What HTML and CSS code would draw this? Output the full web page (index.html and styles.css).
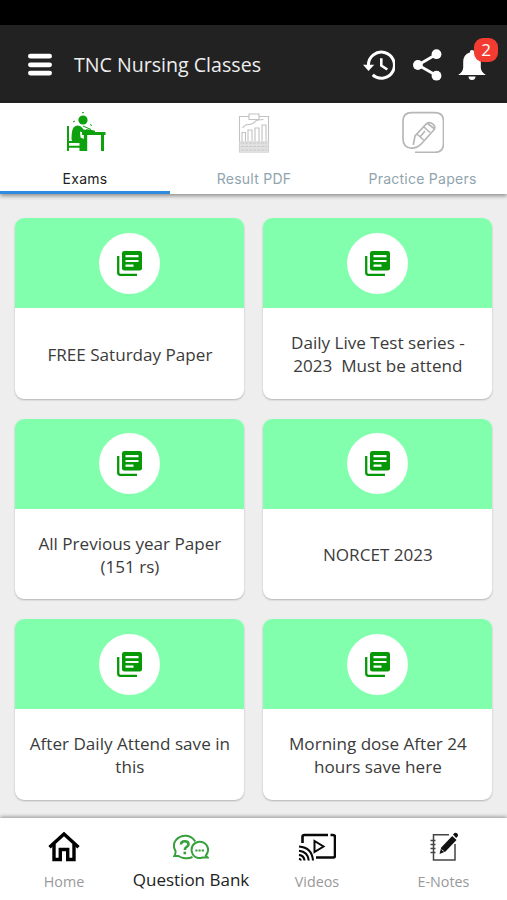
FILE: index.html
```html
<!DOCTYPE html>
<html lang="en">
<head>
<meta charset="utf-8">
<meta name="viewport" content="width=device-width">
<title>TNC Nursing Classes</title>
<link rel="stylesheet" href="styles.css">
</head>
<body>
<svg class="defs" width="0" height="0">
  <symbol id="library" viewBox="0 0 25 25">
    <path d="M1.2 5v16.600q0 2.200 2.200 2.200H20" fill="none" stroke="#079807" stroke-width="2.300"/>
    <rect x="5" y="0" width="20" height="19.500" rx="2.300" fill="#079807"/>
    <path d="M8.500 5.200h13M8.500 10h13M8.500 14.700h8" stroke="#fff" stroke-width="2.200"/>
  </symbol>
</svg>
<div class="status"></div>
<header class="bar">
  <svg class="menu" viewBox="0 0 24 24" width="24" height="24"><path d="M2.400 3.200h19.200M2.400 11.800h19.200M2.400 20.100h19.200" stroke="#fff" stroke-width="4.800" stroke-linecap="round"/></svg>
  <h1 class="title">TNC Nursing Classes</h1>
  <div class="actions">
    <svg width="32" height="30" viewBox="0 0 32 30" fill="none" stroke="#fff"><path d="M5.400 15.200A13 13 0 1 1 9.700 24.800" stroke-width="3"/><path d="M0 14.800h11.200L5.500 21z" fill="#fff" stroke="none"/><path d="M18.300 8.200v7.300l6 4" stroke-width="2.600"/></svg>
    <svg width="29" height="32" viewBox="0 0 29 32" fill="#fff"><path d="M23.500 5.300 5 16l18.500 10.500" fill="none" stroke="#fff" stroke-width="2.800"/><circle cx="23.500" cy="5.200" r="4.900"/><circle cx="4.900" cy="16" r="4.900"/><circle cx="23.500" cy="26.700" r="4.900"/></svg>
    <div class="bell"><svg width="28" height="32" viewBox="0 0 28 32" fill="#fff"><path d="M14 1q2.200 0 2.200 2.400Q22.800 5.400 22.800 13v5.500q0 4 5 7.500H.2q5-3.500 5-7.500V13q0-7.600 6.600-9.600Q11.800 1 14 1zM10.400 27.500h7.200q-.5 3.500-3.600 3.500t-3.600-3.500z"/></svg><span class="badge">2</span></div>
  </div>
</header>
<nav class="tabs">
  <div class="tab active">
    <svg width="42" height="42" viewBox="65 111 42 42" fill="#0da20d"><circle cx="84" cy="120" r="4.600"/><path d="M74.500 127.500q3-3 6.500-1.500 2 1 3.500 3.500l5 .8q2.500 1 1.500 2.500l-6 .2-4-1.500.5 6 4.500 2v11.500H82V143h-6q-3.500-.5-3.500-4.500 0-7.500 2-11z"/><path d="M87 129.200q4-.2 9 1.600v1.500h-9z"/><path d="M83 132h23.500v3H105v16h-3v-16H88.200v16h-3.400v-16H83z"/><path d="M69 126v25M69 142h14M69 146.800h13M81.500 142v9" fill="none" stroke="#0da20d" stroke-width="2"/><path d="M83 112.700h2M74 122l2-1M91 124.500l2 1M84 126l8 3.500" fill="none" stroke="#0da20d" stroke-width="1"/></svg>
    <span>Exams</span>
  </div>
  <div class="tab">
    <svg width="32" height="42" viewBox="238 111 32 42" fill="none" stroke="#c2c2c2" stroke-width="1.100"><path d="M249 116.500h-9.500V152h29v-35.500H259M249 114h10v5.500h-10z"/><path d="M242.500 128q3-4 6-3.500 4 .5 7-3.500 2-1 8-1.500M242 141v-8.500h3.500v8.500M248 141v-11h4v11M255 141v-13h4v13M262 141v-16h4v16"/><path d="M239.500 141h29v11h-29z" fill="#e0e0e0" stroke="none"/><path d="M241 143h26M241 146.500h26M241 150h26" stroke-dasharray="3 1" opacity=".7"/></svg>
    <span>Result PDF</span>
  </div>
  <div class="tab">
    <svg width="42" height="42" viewBox="401 111 42 42" fill="none" stroke="#b7b7b7" stroke-width="1.700"><path d="M414 152.300h20q8.500 0 8.500-8.500V121.200q0-8.500-8.500-8.500h-23.500q-8.500 0-8.500 8.500v17.500q0 9 8.500 9.500 5.500 0 9.500-4l13-14.500q2-3-1-5.500-3.500-3-6.500-.5L414 136l-1.700 9M416 134l6.500 6M422 126l7 6.500M426 123l7 5.500M419 137l5-6"/></svg>
    <span>Practice Papers</span>
  </div>
</nav>
<main class="grid">
  <article class="card"><div class="cover"><div class="disc"><svg width="25" height="25"><use href="#library"/></svg></div></div><p>FREE Saturday Paper</p></article>
  <article class="card"><div class="cover"><div class="disc"><svg width="25" height="25"><use href="#library"/></svg></div></div><p>Daily Live Test series -<br>2023&nbsp; Must be attend</p></article>
  <article class="card"><div class="cover"><div class="disc"><svg width="25" height="25"><use href="#library"/></svg></div></div><p>All Previous year Paper<br>(151 rs)</p></article>
  <article class="card"><div class="cover"><div class="disc"><svg width="25" height="25"><use href="#library"/></svg></div></div><p>NORCET 2023</p></article>
  <article class="card"><div class="cover"><div class="disc"><svg width="25" height="25"><use href="#library"/></svg></div></div><p>After Daily Attend save in<br>this</p></article>
  <article class="card"><div class="cover"><div class="disc"><svg width="25" height="25"><use href="#library"/></svg></div></div><p>Morning dose After 24<br>hours save here</p></article>
</main>
<nav class="bottom">
  <div class="item">
    <svg width="34" height="30" viewBox="47 832 34 30" fill="none" stroke="#000" stroke-width="3.400"><path d="M49.500 847.300 64 834l14.500 13.300"/><path d="M54 844v15.500h6.300v-10h7.400v10H74V844"/></svg>
    <span>Home</span>
  </div>
  <div class="item on">
    <svg width="36" height="26" viewBox="173 834 36 26" fill="none" stroke="#36a03b" stroke-width="2"><path d="M192.500 857q-4 2-9 1-3-.5-5-2h-4.200q1.500-2 1.200-5Q172 845 176 840q4-4.500 10-4.200 6 .4 9.200 5.700"/><path d="M205.800 855.500q4-5 1-10-3.500-4.500-9-3.500-6 1.500-6.300 8 .5 6.500 6.500 8 2 .3 4.500-.5h5.200q-1.300-.8-1.900-2z"/><path d="M181 844.500q0-3.300 3.700-3.300 3.800 0 3.800 3 0 1.700-2 2.800-1.700 1-1.700 3" stroke-width="2.600"/><path d="M183.500 853h2.600" stroke-width="2.600"/><path d="M195.300 850.500h2.200M198.500 850.500h2.200M201.700 850.500h2.200" stroke-width="2"/></svg>
    <span>Question Bank</span>
  </div>
  <div class="item">
    <svg width="38" height="30" viewBox="298 832 38 30" fill="none" stroke="#080808" stroke-width="2.600"><path d="M302.500 843v-6q0-2 2-2H328M330.500 835h2.500q2 0 2 2v18.500q0 2-2 2h-17"/><path d="M314.500 841v11l9-5.500z" stroke-width="2"/><path d="M299 846.500q13 1 14 14M299 850.700q9 1 9.800 9.800M299 854.900q5 .8 5.500 5.600M299 858.700q1.500.3 2 1.800" stroke-width="2.100"/></svg>
    <span>Videos</span>
  </div>
  <div class="item">
    <svg width="28" height="30" viewBox="430 831 28 30" fill="none" stroke="#444" stroke-width="1.500"><path d="M449 833.700h-15.500V859h21.500v-16"/><path d="M430.500 839.500h5M430.500 843.500h5M430.500 847.500h5M430.500 851.500h5" stroke-width="1.600"/><path d="m439.500 853 1.700-6.500 11-11.500 4.300 4-11 11.500z" fill="#111" stroke="none"/><path d="m453 833.500 1.500-1.500q1.500-.8 3 .8 1 1.500 0 2.700l-1.300 1.500z" fill="#111" stroke="none"/><path d="m441.800 848.500 2 2" stroke="#fff" stroke-width="1"/></svg>
    <span>E-Notes</span>
  </div>
</nav>
</body>
</html>
```
FILE: styles.css
```css
* { box-sizing: border-box; }
body {
  margin: 0;
  height: 900px;
  display: flex;
  flex-direction: column;
  overflow: hidden;
  background: #eee;
  font-family: "Open Sans", sans-serif;
}
svg { display: block; flex: none; }
.defs { display: none; }
.status { height: 25px; background: #000; flex: none; }
.bar {
  height: 78px;
  flex: none;
  display: flex;
  align-items: center;
  padding: 2px 21px 0 28px;
  background: #222;
}
.title {
  margin: 0 0 0 22px;
  color: #eee;
  font-size: 19.600px;
  font-weight: 400;
  line-height: 28px;
}
.actions { display: flex; align-items: center; gap: 18px; margin-left: auto; }
.actions > svg + svg { margin-right: -2px; }
.bell { position: relative; }
.badge {
  position: absolute;
  left: 16px;
  top: -11px;
  width: 24px;
  height: 24px;
  border-radius: 9px;
  background: #f23c32;
  color: #fff;
  font-size: 17px;
  line-height: 24px;
  text-align: center;
}
.tabs {
  height: 91px;
  flex: none;
  display: grid;
  grid-template-columns: 170px 168px 169px;
  background: #fff;
  box-shadow: 0 2px 4px rgba(0, 0, 0, .4);
}
.tab {
  display: flex;
  flex-direction: column;
  align-items: center;
  padding-top: 8px;
  gap: 16px;
  color: #90a4ae;
  font: 14px/20px Inter, sans-serif;
  letter-spacing: .25px;
}
.tab.active { color: #222; border-bottom: 3px solid #2e8be0; }
.grid {
  flex: 1;
  display: grid;
  grid-template-columns: 229px 229px;
  grid-auto-rows: 180.500px;
  gap: 20px 19px;
  padding: 24.400px 15.400px 0;
}
.card {
  display: flex;
  flex-direction: column;
  background: #fff;
  border-radius: 9px;
  overflow: hidden;
  box-shadow: 0 1px 2px rgba(0, 0, 0, .25);
}
.cover {
  height: 90px;
  display: flex;
  align-items: center;
  justify-content: center;
  background: #82ffad;
}
.disc {
  width: 61px;
  height: 61px;
  border-radius: 50%;
  background: #fff;
  display: flex;
  align-items: center;
  justify-content: center;
}
.card p {
  flex: 1;
  margin: 0;
  padding-top: 1px;
  display: grid;
  place-content: center;
  text-align: center;
  color: #3b3b3b;
  font-size: 17.100px;
  line-height: 23px;
  white-space: nowrap;
}
.bottom {
  height: 82px;
  flex: none;
  position: relative;
  display: grid;
  grid-template-columns: 128px 126px 126px 127px;
  background: #fff;
  box-shadow: 0 -1px 4px rgba(0, 0, 0, .4);
}
.item {
  display: flex;
  flex-direction: column;
  align-items: center;
  padding-top: 14px;
  gap: 10px;
  color: #999;
  font-size: 14.300px;
  line-height: 20px;
}
.item.on { padding-top: 16px; color: #222; font-size: 17px; }
```
